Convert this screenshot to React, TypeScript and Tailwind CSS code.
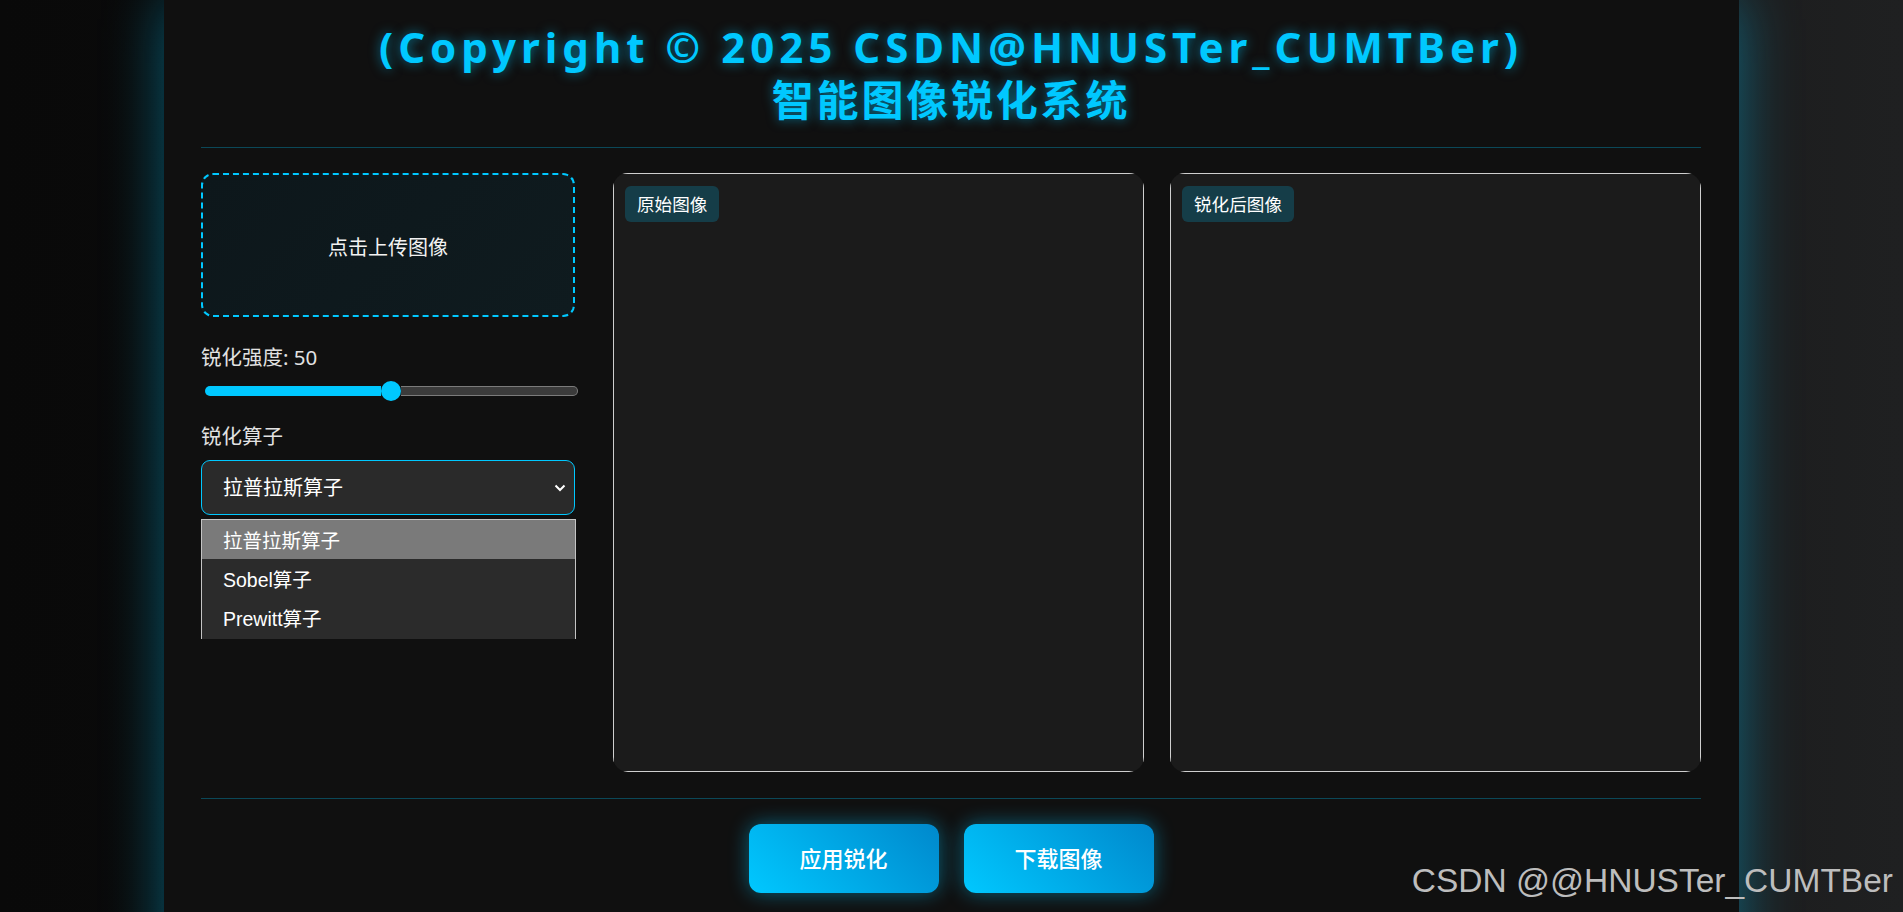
import React from "react";

const cjk = { fontFamily: '"Noto Sans", "Noto Sans CJK SC", sans-serif' };

function ImagePanel({ label }: { label: string }) {
  return (
    <div className="w-[531px] h-[599px] rounded-[15px] overflow-hidden bg-[#1b1b1b]">
      <div className="h-full border border-[#cfcfcf] pt-[12px] pl-[11px]">
        <div
          className="inline-flex h-[36px] px-[12px] items-center rounded-[6px] bg-[rgba(0,200,255,0.2)] text-white text-[17.6px]"
          style={cjk}
        >
          {label}
        </div>
      </div>
    </div>
  );
}

export default function App() {
  return (
    <div className="relative w-full h-[912px] overflow-hidden bg-[linear-gradient(90deg,#090909_0%,#0d0d0d_40%,#1f2021_100%)]">
      <div className="w-[1575px] h-[1000px] mx-auto bg-[#101010] shadow-[0_0_55px_rgba(0,200,255,0.42)] pl-[37px] pr-[38px]">
        {/* header */}
        <div className="pt-[20px] pb-[21px] border-b border-[#0b4858] text-center">
          <h1
            className="font-bold text-[#00c8ff] text-[42px] [text-shadow:0_0_12px_rgba(0,200,255,0.55)]"
            style={cjk}
          >
            <div className="leading-[53px] tracking-[5px]">(Copyright © 2025 CSDN@HNUSTer_CUMTBer)</div>
            <div className="leading-[53px] tracking-[2.8px]">智能图像锐化系统</div>
          </h1>
        </div>

        {/* main */}
        <div className="mt-[25px] flex h-[599px]">
          <div className="w-[374px] relative" style={cjk}>
            <div className="h-[144px] rounded-[12px] border-2 border-dashed border-[#00c8ff] bg-[linear-gradient(135deg,#0d171b,#0f1b1f)] flex items-center justify-center pt-[6px] text-[#f2f2f2] text-[20px]">
              点击上传图像
            </div>
            <div className="mt-[25px] text-[#e2e2e2] text-[20.5px] leading-[30px]">锐化强度: 50</div>
            <div className="mt-[9px] ml-[4px] w-[373px] h-[20px] flex items-center">
              <div className="w-[176px] h-[10px] rounded-l-full bg-[#00c8ff]" />
              <div className="w-[20px] h-[20px] rounded-full bg-[#00c8ff]" />
              <div className="flex-1 h-[10px] rounded-r-full bg-[#3b3b3b] border border-l-0 border-[#7b7b7b]" />
            </div>
            <div className="mt-[20px] text-[#e2e2e2] text-[20.5px] leading-[30px]">锐化算子</div>
            <div className="mt-[9px] h-[55px] rounded-[9px] border border-[#00c8ff] bg-[#2a2a2a] flex items-center justify-between pl-[21px] pr-[8px] text-white text-[20px]">
              <span>拉普拉斯算子</span>
              <svg width="12" height="8" viewBox="0 0 12 8" fill="none">
                <polyline points="1.5,1.5 6,6 10.5,1.5" stroke="#ffffff" strokeWidth="2" />
              </svg>
            </div>
            <div
              className="absolute left-0 top-[346px] w-[375px] h-[120px] border border-b-0 border-[#c4c4c4] bg-[#2b2b2b] text-white text-[19.5px] flex flex-col"
              style={{ fontFamily: '"Liberation Sans", "Noto Sans CJK SC", sans-serif' }}
            >
              <div className="h-[39px] bg-[#7a7a7a] flex items-center pl-[21px] pt-[5px]">拉普拉斯算子</div>
              <div className="h-[39px] flex items-center pl-[21px] pt-[5px]">Sobel算子</div>
              <div className="h-[39px] flex items-center pl-[21px] pt-[5px]">Prewitt算子</div>
            </div>
          </div>
          <div className="ml-[38px] flex gap-[26px]">
            <ImagePanel label="原始图像" />
            <ImagePanel label="锐化后图像" />
          </div>
        </div>

        {/* footer */}
        <div className="mt-[26px] border-t border-[#0b4858] pt-[25px] flex justify-center gap-[25px]">
          {["应用锐化", "下载图像"].map((t) => (
            <button
              key={t}
              className="w-[190px] h-[69px] rounded-[12px] bg-[linear-gradient(45deg,#00c8ff,#0088cc)] shadow-[0_0_20px_rgba(0,200,255,0.45)] text-white text-[22px] font-medium"
              style={cjk}
            >
              {t}
            </button>
          ))}
        </div>
      </div>

      <div
        className="absolute right-[10px] bottom-[15px] text-[33.5px] leading-none text-[#bdbdbd]"
        style={{ fontFamily: '"Liberation Sans", Arial, sans-serif' }}
      >
        CSDN @@HNUSTer_CUMTBer
      </div>
    </div>
  );
}
